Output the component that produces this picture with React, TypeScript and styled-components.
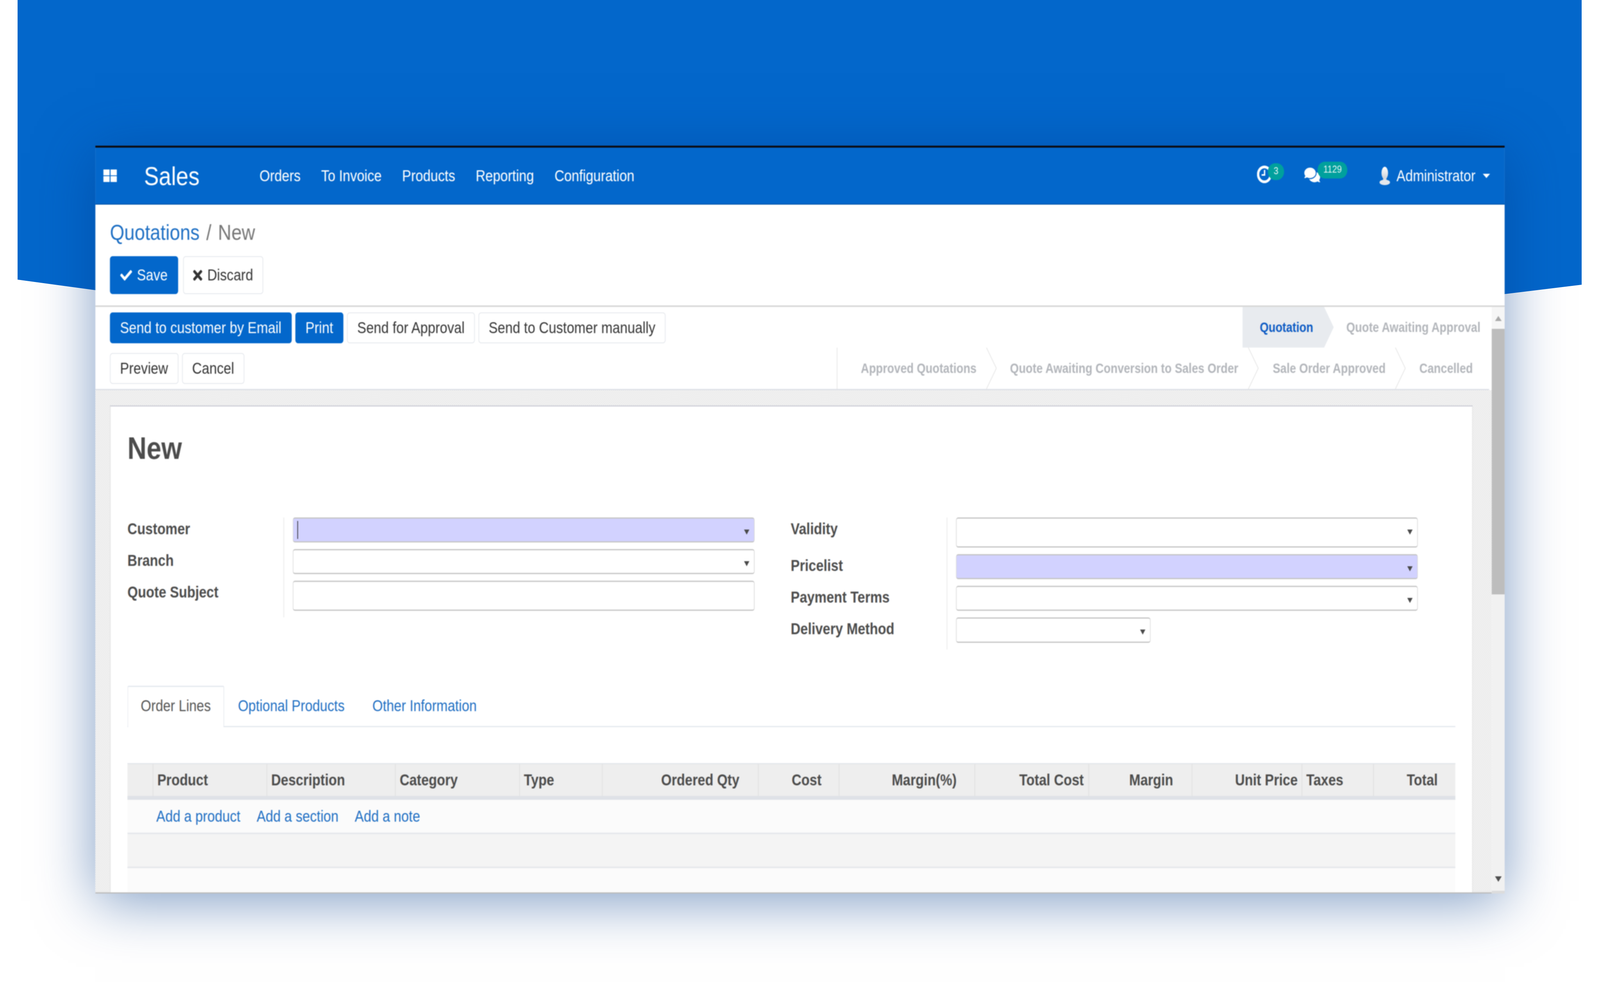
import React from "react";
import styled, {createGlobalStyle} from "styled-components";
import {FaCheck, FaTimes, FaComments} from "react-icons/fa";

const PAGE_WIDTH = 4832;
const PAGE_HEIGHT = 2576;

const GlobalStyle = createGlobalStyle`
  html, body {
    margin: 0;
    padding: 0;
    background: #fff;
    overflow: hidden;
    font-family: "Liberation Sans", Arial, sans-serif;
    color: #4c4c4c;
  }
`

const NAV_ITEMS = ["Orders", "To Invoice", "Products", "Reporting", "Configuration"];

const COLUMNS = [
    {label: "", width: 76},
    {label: "Product", width: 344},
    {label: "Description", width: 388},
    {label: "Category", width: 375},
    {label: "Type", width: 250},
    {label: "Ordered Qty", width: 471, pad: 56},
    {label: "Cost", width: 244, pad: 52},
    {label: "Margin(%)", width: 410, pad: 54},
    {label: "Total Cost", width: 344, pad: 14},
    {label: "Margin", width: 312, pad: 56},
    {label: "Unit Price", width: 332, pad: 12},
    {label: "Taxes", width: 216},
    {label: "Total", width: 248, pad: 53},
];

const PersonIcon = () => (
    <svg width="32" height="47" viewBox="0 0 32 47">
        <defs>
            <linearGradient id="person" x1="0" y1="0" x2="0" y2="1">
                <stop offset="0" stopColor="#ffffff"/>
                <stop offset="1" stopColor="#c9ced6"/>
            </linearGradient>
        </defs>
        <ellipse cx="16" cy="16" rx="10" ry="16" fill="url(#person)"/>
        <rect x="11" y="28" width="10" height="10" fill="#d5d9df"/>
        <ellipse cx="16" cy="40" rx="16" ry="7" fill="#e4e7ec"/>
    </svg>
);

const AppsIcon = () => (
    <svg width="41" height="32" viewBox="0 0 41 32">
        <rect x="0" y="0" width="19" height="15" fill="#fff"/>
        <rect x="22" y="0" width="19" height="15" fill="#fff"/>
        <rect x="0" y="17" width="19" height="15" fill="#fff"/>
        <rect x="22" y="17" width="19" height="15" fill="#fff"/>
    </svg>
);

const ClockIcon = () => (
    <svg width="45" height="45" viewBox="0 0 45 45">
        <circle cx="22.5" cy="22.5" r="19" fill="none" stroke="#fff" strokeWidth="7"/>
        <path d="M23 11v13h-9" fill="none" stroke="#fff" strokeWidth="4"/>
    </svg>
);

const Field = ({$h, $w, $req, $arrow = true, children}: {$h: number, $w?: number, $req?: boolean, $arrow?: boolean, children?: React.ReactNode}) => (
    <FieldBox $h={$h} $w={$w} $req={$req}>
        {children}
        {$arrow && <FieldArrow/>}
    </FieldBox>
);

export default function App() {
    // the browser window can come out narrower than the design, fit the whole page in it
    const fit = `scale(${window.innerWidth / PAGE_WIDTH}, ${window.innerHeight / PAGE_HEIGHT})`;

    return (
        <Viewport>
            <GlobalStyle/>
            <Page style={{transform: fit}}>
                <BlueShape/>
                <Window>
                    <TopBar>
                        <AppsIcon/>
                        <BrandName>Sales</BrandName>
                        <Nav>
                            {NAV_ITEMS.map(item => <NavLink key={item}>{item}</NavLink>)}
                        </Nav>
                        <TopRight>
                            <ClockHolder>
                                <ClockIcon/>
                                <Badge $left={33} $top={-6}>3</Badge>
                            </ClockHolder>
                            <ChatHolder>
                                <FaComments size={48} color="#fff"/>
                                <Badge $left={40} $top={-10}>1129</Badge>
                            </ChatHolder>
                            <UserName>
                                <PersonIcon/>
                                <span>Administrator</span>
                                <UserCaret/>
                            </UserName>
                        </TopRight>
                    </TopBar>

                    <ControlPanel>
                        <Breadcrumb>
                            <CrumbLink>Quotations</CrumbLink>
                            <CrumbSlash>/</CrumbSlash>
                            <CrumbCurrent>New</CrumbCurrent>
                        </Breadcrumb>
                        <ControlButtons>
                            <SaveButton $primary><FaCheck size={36}/>Save</SaveButton>
                            <SaveButton><DiscardIcon/>Discard</SaveButton>
                        </ControlButtons>
                    </ControlPanel>

                    <Body>
                        <Content>
                            <StatusPanel>
                                <ActionColumn>
                                    <ActionRow>
                                        <Button $primary>Send to customer by Email</Button>
                                        <Button $primary>Print</Button>
                                        <Button>Send for Approval</Button>
                                        <Button>Send to Customer manually</Button>
                                    </ActionRow>
                                    <ActionRow>
                                        <Button>Preview</Button>
                                        <Button>Cancel</Button>
                                    </ActionRow>
                                </ActionColumn>
                                <StatusColumn>
                                    <StatusRow>
                                        <ActiveStage>Quotation</ActiveStage>
                                        <NextStage>Quote Awaiting Approval</NextStage>
                                    </StatusRow>
                                    <StatusRowBottom>
                                        <Stage $pad={71}>Approved Quotations<Chevron/></Stage>
                                        <Stage $pad={71}>Quote Awaiting Conversion to Sales Order<Chevron/></Stage>
                                        <Stage $pad={74}>Sale Order Approved<Chevron/></Stage>
                                        <LastStage>Cancelled</LastStage>
                                    </StatusRowBottom>
                                </StatusColumn>
                            </StatusPanel>

                            <SheetArea>
                                <Sheet>
                                    <Title>New</Title>
                                    <FormGroups>
                                        <FormGroup>
                                            <Label>Customer</Label>
                                            <FieldCell><Field $h={64} $req><TextCaret/></Field></FieldCell>
                                            <Label>Branch</Label>
                                            <FieldCell><Field $h={64}/></FieldCell>
                                            <Label>Quote Subject</Label>
                                            <FieldCell><Field $h={77} $arrow={false}/></FieldCell>
                                        </FormGroup>
                                        <FormGroup>
                                            <Label>Validity</Label>
                                            <FieldCell><Field $h={77}/></FieldCell>
                                            <Label>Pricelist</Label>
                                            <FieldCell><Field $h={64} $req/></FieldCell>
                                            <Label>Payment Terms</Label>
                                            <FieldCell><Field $h={64}/></FieldCell>
                                            <Label>Delivery Method</Label>
                                            <FieldCell><Field $h={65} $w={588}/></FieldCell>
                                        </FormGroup>
                                    </FormGroups>

                                    <Tabs>
                                        <ActiveTab>Order Lines</ActiveTab>
                                        <Tab>Optional Products</Tab>
                                        <Tab>Other Information</Tab>
                                    </Tabs>

                                    <TableHead>
                                        {COLUMNS.map((col, i) => (
                                            <HeadCell key={i} $first={i === 0} $pad={col.pad}>{col.label}</HeadCell>
                                        ))}
                                    </TableHead>
                                    <AddRow>
                                        <AddLink>Add a product</AddLink>
                                        <AddLink>Add a section</AddLink>
                                        <AddLink>Add a note</AddLink>
                                    </AddRow>
                                    <GreyRow/>
                                    <LastRow/>
                                </Sheet>
                            </SheetArea>
                        </Content>
                        <ScrollBar>
                            <ScrollEnd>
                                <ScrollUp/>
                            </ScrollEnd>
                            <ScrollThumb/>
                            <ScrollTrack>
                                <ScrollDown/>
                            </ScrollTrack>
                            <ScrollCorner/>
                        </ScrollBar>
                    </Body>
                </Window>
            </Page>
        </Viewport>
    )
}

const Viewport = styled.div`
  width: 100vw;
  height: 100vh;
  overflow: hidden;
`

const Page = styled.div`
  position: relative;
  box-sizing: border-box;
  width: ${PAGE_WIDTH}px;
  height: ${PAGE_HEIGHT}px;
  padding: 373px 288px 0;
  overflow: hidden;
  background: #fff;
  transform-origin: 0 0;
`

const BlueShape = styled.div`
  position: absolute;
  left: 53px;
  top: 0;
  width: 4724px;
  height: 753px;
  background: #0367cb;
  clip-path: polygon(0 0, 4724px 0, 4724px 729px, 4491px 753px, 235px 743px, 0 716px);
`

const Window = styled.div`
  position: relative;
  display: flex;
  flex-direction: column;
  height: 1915px;
  background: #fff;
  box-shadow: 0 20px 150px rgba(0, 60, 140, .5);
  filter: blur(1px);
`

const TopBar = styled.header`
  box-sizing: border-box;
  display: flex;
  align-items: center;
  height: 151px;
  flex: none;
  padding: 0 44px 0 24px;
  background: #0367cb;
  border-top: 5px solid #0c0c12;
  border-bottom: 2px solid #0354a6;
  color: #fff;
`

const BrandName = styled.div`
  margin-left: 82px;
  font-size: 67px;
  line-height: 1;
`

const Nav = styled.nav`
  display: flex;
  gap: 62px;
  margin-left: 181px;
`

const NavLink = styled.a`
  font-size: 40.6px;
`

const TopRight = styled.div`
  display: flex;
  align-items: center;
  margin-left: auto;
`

const ClockHolder = styled.div`
  position: relative;
  display: flex;
  margin-bottom: 8px;
`

const ChatHolder = styled.div`
  position: relative;
  display: flex;
  margin-left: 98px;
  margin-bottom: 4px;
`

const Badge = styled.span<{ $left: number, $top: number }>`
  position: absolute;
  left: ${props => props.$left}px;
  top: ${props => props.$top}px;
  height: 43px;
  padding: 0 17px;
  border-radius: 22px;
  background: #00a09d;
  color: #e8f6f5;
  font-size: 26px;
  line-height: 38px;
`

const UserName = styled.div`
  display: flex;
  align-items: center;
  margin-left: 179px;
  font-size: 40.5px;

  span {
    margin-left: 19px;
  }
`

const UserCaret = styled.i`
  margin-left: 22px;
  border-top: 11px solid #fff;
  border-left: 11px solid transparent;
  border-right: 11px solid transparent;
`

const ControlPanel = styled.div`
  box-sizing: border-box;
  flex: none;
  height: 262px;
  padding: 36px 44px 0;
  border-bottom: 4px solid #d8d8d8;
`

const Breadcrumb = styled.div`
  display: flex;
  align-items: center;
  height: 68px;
  font-size: 56px;
`

const CrumbLink = styled.a`
  color: #1f70c4;
`

const CrumbSlash = styled.span`
  margin: 0 20px;
  color: #777;
`

const CrumbCurrent = styled.span`
  color: #777;
`

const ControlButtons = styled.div`
  display: flex;
  gap: 15px;
  margin-top: 28px;
`

const Button = styled.button<{ $primary?: boolean }>`
  box-sizing: border-box;
  display: inline-flex;
  align-items: center;
  height: 79px;
  padding: 0 29px 0 28.5px;
  border: 2px solid ${props => props.$primary ? "#0367cb" : "#e4e7ec"};
  border-radius: 8px;
  background: ${props => props.$primary ? "#0367cb" : "#fff"};
  color: ${props => props.$primary ? "#fff" : "#333"};
  font-family: inherit;
  font-size: 40.8px;
  white-space: nowrap;
`

const SaveButton = styled(Button)`
  gap: 15px;
  height: 97px;
`

const DiscardIcon = styled(FaTimes)`
  width: 28px;
  height: 40px;
`

const Body = styled.div`
  display: flex;
  flex: 1;
  min-height: 0;
`

const Content = styled.div`
  display: flex;
  flex-direction: column;
  flex: 1;
  min-width: 0;
`

const StatusPanel = styled.div`
  box-sizing: border-box;
  display: flex;
  justify-content: space-between;
  flex: none;
  height: 213px;
  margin-right: 8px;
  border-bottom: 3px solid #dcdfe6;
`

const ActionColumn = styled.div`
  display: flex;
  flex-direction: column;
  gap: 25px;
  padding: 14px 0 0 44px;
`

const ActionRow = styled.div`
  display: flex;
  gap: 11px;
`

const StatusColumn = styled.div`
  display: flex;
  flex-direction: column;
  align-items: flex-end;
  font-size: 34.2px;
  font-weight: 700;
  color: #b3b6bb;
`

const StatusRow = styled.div`
  display: flex;
  align-items: center;
  height: 104px;
`

const StatusRowBottom = styled(StatusRow)`
  border-left: 2px solid #e6e6e6;
  height: 106px;
`

const ActiveStage = styled.div`
  display: flex;
  align-items: center;
  box-sizing: border-box;
  height: 100%;
  padding: 0 62px 0 52px;
  margin-right: -29px;
  background: #e8ebef;
  color: #0f5dc4;
  clip-path: polygon(0 0, calc(100% - 29px) 0, 100% 50%, calc(100% - 29px) 100%, 0 100%);
`

const NextStage = styled.div`
  padding: 0 26px 0 67px;
  white-space: nowrap;
`

const Stage = styled.div<{ $pad: number }>`
  position: relative;
  display: flex;
  align-items: center;
  height: 100%;
  padding: 0 30px 0 ${props => props.$pad}px;
  white-space: nowrap;
`

const LastStage = styled(Stage).attrs({$pad: 72})`
  padding-right: 49px;
`

const ChevronSvg = styled.svg`
  position: absolute;
  left: 100%;
  top: 0;
  width: 32px;
  height: 100%;
  margin-left: -1px;
`

const Chevron = () => (
    <ChevronSvg viewBox="0 0 32 106" preserveAspectRatio="none">
        <polyline points="1,0 31,53 1,106" fill="none" stroke="#e4e4e4" strokeWidth="2"/>
    </ChevronSvg>
);

const SheetArea = styled.div`
  flex: 1;
  min-height: 0;
  padding: 39px 57px 0 44px;
  overflow: hidden;
  background: repeating-conic-gradient(#e6e6e6 0 25%, #f7f7f7 0 50%) 0 0 / 6px 6px;
  border-bottom: 3px solid #bcbcbc;
  box-shadow: inset 0 -4px 0 #ececec;
`

const Sheet = styled.div`
  box-sizing: border-box;
  display: flex;
  flex-direction: column;
  height: 100%;
  padding: 57px 51px 0;
  background: #fff;
  border-top: 3px solid #cfd0d8;
  border-left: 2px solid #dedede;
  border-right: 2px solid #dedede;
`

const Title = styled.h1`
  margin: 0;
  font-size: 80px;
  line-height: 100px;
  font-weight: 700;
  color: #4c4c4c;
`

const FormGroups = styled.div`
  display: flex;
  justify-content: space-between;
  margin-top: 127px;
  padding-right: 113px;
`

const FormGroup = styled.div`
  display: grid;
  grid-template-columns: 471px 1423px;
  align-content: start;
`

const Label = styled.label`
  font-size: 40.5px;
  font-weight: 700;
  line-height: 58px;
  color: #4c4c4c;
`

const FieldCell = styled.div`
  box-sizing: border-box;
  padding: 0 0 17px 26px;
  border-left: 2px solid #e8e8e8;
`

const FieldBox = styled.div<{ $h: number, $w?: number, $req?: boolean }>`
  position: relative;
  box-sizing: border-box;
  width: ${props => props.$w ? `${props.$w}px` : "100%"};
  height: ${props => props.$h}px;
  border: 2px solid #d4d4d4;
  border-top: 3px solid #c4c4c4;
  border-bottom: 3px solid #c4c4c4;
  border-radius: 7px;
  background: ${props => props.$req ? "#d2d2ff" : "#fff"};
`

const FieldArrow = styled.i`
  position: absolute;
  right: 14px;
  top: 28px;
  border-top: 13px solid #4a4a4a;
  border-left: 8px solid transparent;
  border-right: 8px solid transparent;
`

const TextCaret = styled.i`
  position: absolute;
  left: 12px;
  top: 6px;
  width: 2px;
  height: 46px;
  background: #222;
`

const Tabs = styled.div`
  display: flex;
  box-sizing: border-box;
  height: 106px;
  margin-top: 93px;
  border-bottom: 3px solid #e4e8ee;
`

const Tab = styled.a`
  display: flex;
  align-items: center;
  padding: 0 42px;
  color: #1f70c4;
  font-size: 40.5px;
`

const ActiveTab = styled(Tab)`
  box-sizing: border-box;
  height: 106px;
  padding: 0 38px 6px;
  background: #fff;
  color: #555;
  border: 2px solid #e4e8ee;
  border-top-width: 3px;
  border-bottom: 0;
  border-radius: 4px 4px 0 0;
`

const TableHead = styled.div`
  box-sizing: border-box;
  display: grid;
  grid-template-columns: ${COLUMNS.map(col => `${col.width}px`).join(" ")};
  flex: none;
  height: 94px;
  margin-top: 92px;
  background: #eee;
  border-top: 3px solid #e3e6ea;
  border-bottom: 10px solid #dfe2e7;
`

const HeadCell = styled.div<{ $first?: boolean, $pad?: number }>`
  box-sizing: border-box;
  display: flex;
  align-items: center;
  justify-content: ${props => props.$pad ? "flex-end" : "flex-start"};
  padding: 0 ${props => props.$pad ?? 0}px 0 ${props => props.$pad ? 0 : 12}px;
  border-left: ${props => props.$first ? "0" : "2px solid #dfdfdf"};
  font-size: 40.5px;
  font-weight: 700;
  white-space: nowrap;
  color: #4c4c4c;
`

const AddRow = styled.div`
  box-sizing: border-box;
  display: flex;
  align-items: center;
  gap: 49px;
  flex: none;
  height: 88px;
  padding-left: 87px;
  background: #fbfbfb;
  border-bottom: 4px solid #e6e8ec;
`

const AddLink = styled.a`
  color: #1f70c4;
  font-size: 40.8px;
`

const GreyRow = styled.div`
  box-sizing: border-box;
  flex: none;
  height: 87px;
  background: #f4f4f4;
  border-bottom: 4px solid #e6e8ec;
`

const LastRow = styled.div`
  flex: 1;
  background: #fbfbfb;
`

const ScrollBar = styled.aside`
  display: flex;
  flex-direction: column;
  flex: none;
  width: 39px;
  background: #f1f1f1;
`

const ScrollEnd = styled.div`
  display: flex;
  justify-content: center;
  flex: none;
  height: 56px;
  padding-top: 23px;
  box-sizing: border-box;
  background: #f6f6f6;
`

const ScrollUp = styled.i`
  height: 0;
  border-bottom: 13px solid #a8a8a8;
  border-left: 10px solid transparent;
  border-right: 10px solid transparent;
`

const ScrollThumb = styled.div`
  flex: none;
  height: 680px;
  background: #bdbdbd;
`

const ScrollTrack = styled.div`
  display: flex;
  align-items: flex-end;
  justify-content: center;
  flex: 1;
  padding-bottom: 23px;
`

const ScrollDown = styled.i`
  border-top: 14px solid #4f4f4f;
  border-left: 10px solid transparent;
  border-right: 10px solid transparent;
`

const ScrollCorner = styled.div`
  flex: none;
  height: 7px;
  background: #dcdcdc;
`
